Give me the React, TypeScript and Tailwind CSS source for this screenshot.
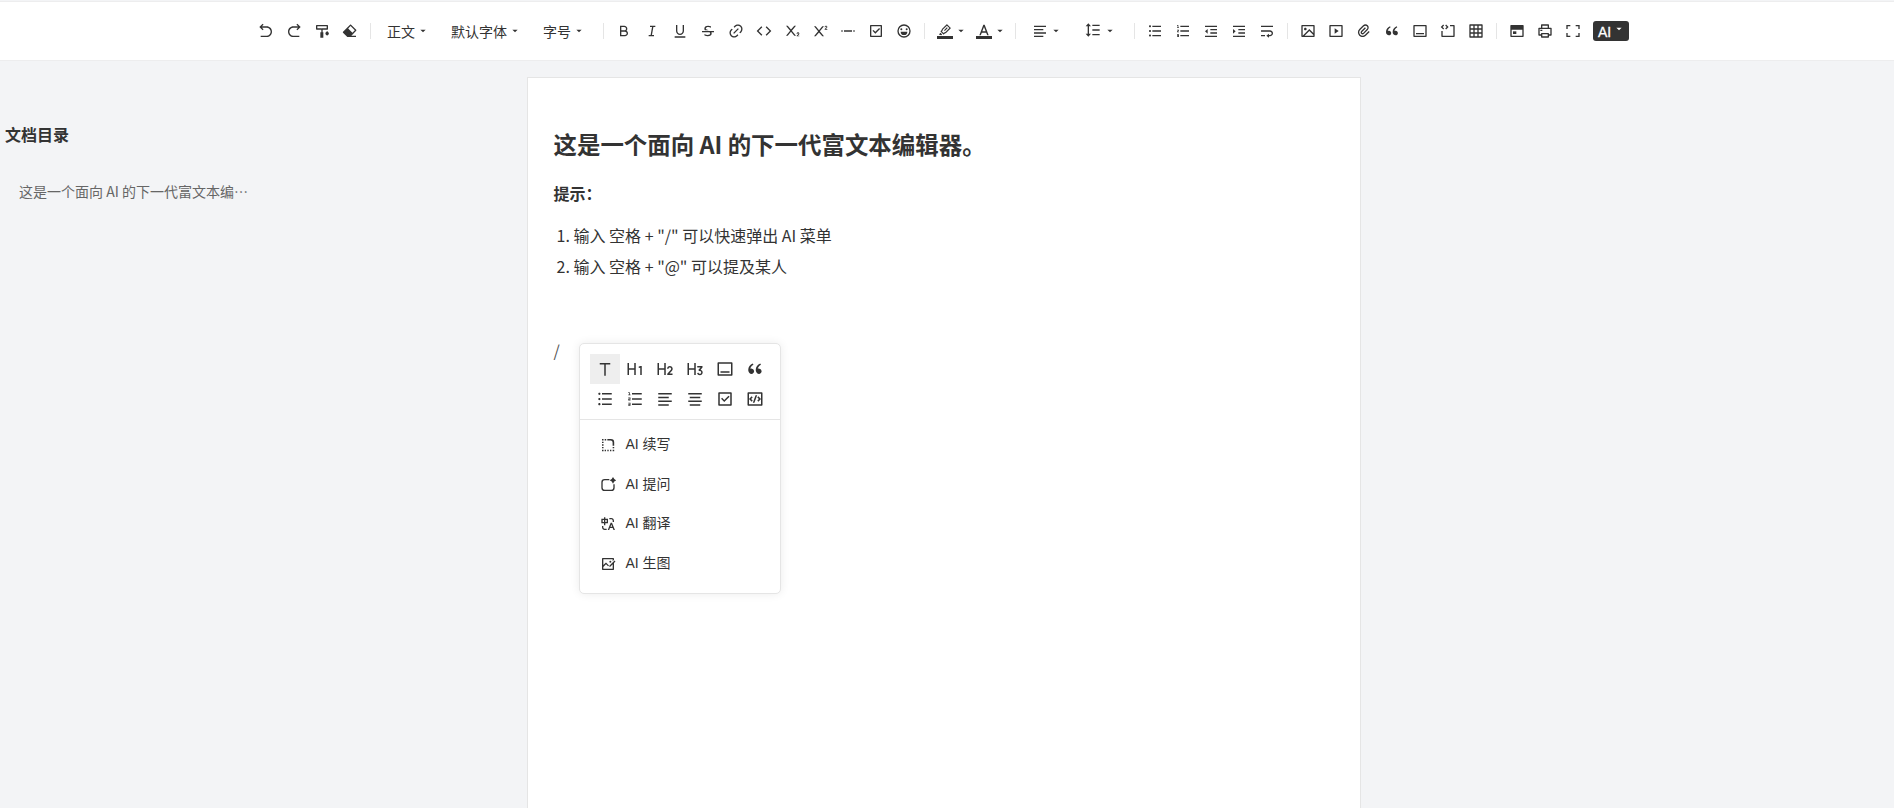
import type { ReactNode } from "react";
import type { IconType } from "react-icons";
import {
  RiArrowGoBackLine, RiArrowGoForwardLine, RiEraserFill, RiBold, RiItalic, RiUnderline,
  RiStrikethrough, RiLink, RiCodeLine, RiSubscript, RiSuperscript, RiSeparator,
  RiCheckboxLine, RiMarkPenLine, RiAlignLeft, RiAlignCenter,
  RiListUnordered, RiListOrdered, RiIndentDecrease, RiIndentIncrease, RiTextWrap, RiImageLine,
  RiAttachment2, RiDoubleQuotesL, RiLayoutBottom2Line, RiPrinterLine,
  RiFullscreenLine, RiText, RiH1, RiH2, RiH3, RiTranslate, RiCodeBoxLine,
} from "react-icons/ri";

function Drawing({ children, size = 16 }: { children: ReactNode; size?: number }) {
  return (
    <svg width={size} height={size} viewBox="0 0 24 24" fill="currentColor">
      {children}
    </svg>
  );
}

function PainterIcon() {
  return (
    <Drawing>
      <path d="M4 3h16a1 1 0 0 1 1 1v5a1 1 0 0 1-1 1h-7v4h1v8h-4.500v-8H11V9a1 1 0 0 1 .5-1H19V5H5v3h6v2H4a1 1 0 0 1-1-1V4a1 1 0 0 1 1-1z" />
      <path d="M19.700 12l2 2.200a2.600 2.600 0 1 1-4 0z" />
    </Drawing>
  );
}
function LineHeightIcon() {
  return (
    <Drawing>
      <path d="M11 4h11v2H11zM11 11h11v2H11zM11 18h11v2H11zM5 2l4 4.500H6v11h3L5 22l-4-4.500h3v-11H1z" />
    </Drawing>
  );
}
function EmojiIcon() {
  return (
    <Drawing>
      <path d="M12 2a10 10 0 1 1 0 20 10 10 0 0 1 0-20zm0 2a8 8 0 1 0 0 16 8 8 0 0 0 0-16z" fillRule="evenodd" />
      <path d="M7 13h10a5 5 0 0 1-10 0zM8 11a1.500 1.500 0 1 1 0-3 1.500 1.500 0 0 1 0 3zm8 0a1.500 1.500 0 1 1 0-3 1.500 1.500 0 0 1 0 3z" />
    </Drawing>
  );
}
function GridIcon() {
  return (
    <Drawing>
      <path d="M3 2h18a1 1 0 0 1 1 1v18a1 1 0 0 1-1 1H3a1 1 0 0 1-1-1V3a1 1 0 0 1 1-1zm1 2v4h4V4zm6 0v4h4V4zm6 0v4h4V4zM4 10v4h4v-4zm6 0v4h4v-4zm6 0v4h4v-4zM4 16v4h4v-4zm6 0v4h4v-4zm6 0v4h4v-4z" fillRule="evenodd" />
    </Drawing>
  );
}
function VideoIcon() {
  return (
    <Drawing>
      <path d="M3 3h18a1 1 0 0 1 1 1v16a1 1 0 0 1-1 1H3a1 1 0 0 1-1-1V4a1 1 0 0 1 1-1zm1 2v14h16V5H4zm6 3l6 4-6 4V8z" />
    </Drawing>
  );
}
function CodeBlockIcon() {
  return (
    <Drawing>
      <path d="M4.8 2.2L6.2 3.6 3.9 6l2.3 2.4-1.4 1.4L1.1 6zM9.2 2.2L7.8 3.6 10.1 6 7.8 8.4l1.4 1.4L12.9 6zM15 3h6a1 1 0 0 1 1 1v16a1 1 0 0 1-1 1H3a1 1 0 0 1-1-1v-8h2v7h16V5h-5z" />
    </Drawing>
  );
}
function SourceIcon() {
  return (
    <Drawing>
      <path d="M3 3h18a1 1 0 0 1 1 1v16a1 1 0 0 1-1 1H3a1 1 0 0 1-1-1V4a1 1 0 0 1 1-1zm1 7v9h16v-9H4z" fillRule="evenodd" />
      <path d="M6 12.500h5v4H6z" />
    </Drawing>
  );
}
function ContinueIcon() {
  return (
    <Drawing>
      <path d="M3 3h2.300v2.300H3zM7 3h2.300v2.300H7zM3 7h2.300v2H3zM3 11h2.300v2H3zM3 15h2.300v2H3zM3 19h2.300v2.300H3zM7 19h2v2.300H7zM11 19h2v2.300h-2zM15 19h2v2.300h-2zM19 19h2.300v2.300h-2.300zM19 15h2.300v2h-2.300zM11 3h5.300a5 5 0 0 1 5 5v5h-2.400V8.400a3 3 0 0 0-3-3H11z" />
    </Drawing>
  );
}
function AskIcon() {
  return (
    <Drawing>
      <path d="M14 3v2H7a3 3 0 0 0-3 3v8a3 3 0 0 0 3 3h10a3 3 0 0 0 3-3v-5h2v5a5 5 0 0 1-5 5H7a5 5 0 0 1-5-5V8a5 5 0 0 1 5-5z" />
      <path d="M19.500 0l1.900 3.100L24.500 5l-3.100 1.900L19.500 10l-1.900-3.100L14.500 5l3.100-1.900z" />
    </Drawing>
  );
}
function DrawIcon() {
  return (
    <Drawing>
      <path d="M20 3a1 1 0 0 1 1 1v1.800l-2 2V5H5v8.600L9 9.600l4.500 4.500-1.400 1.400L9 12.400l-4 4V19h14v-7l2-2v10a1 1 0 0 1-1 1H4a1 1 0 0 1-1-1V4a1 1 0 0 1 1-1zM21.800 6.800l1.400 1.400-7.800 7.800H14v-1.400zM15.500 7a1.500 1.500 0 1 1 0 3 1.500 1.500 0 0 1 0-3z" />
    </Drawing>
  );
}
function LetterIcon() {
  return (
    <Drawing>
      <path d="M15.246 16H8.754l-1.600 4H5l6-16h2l6 16h-2.154l-1.600-4zm-.8-2L12 7.500 9.554 14h4.892z" />
    </Drawing>
  );
}

function Caret({ className = "" }: { className?: string }) {
  return (
    <svg className={className} width="16" height="16" viewBox="0 0 24 24" fill="currentColor">
      <path d="M12 14L8 10H16L12 14Z" />
    </svg>
  );
}

type AnyIcon = IconType | (() => ReactNode);

function Icons({ list }: { list: AnyIcon[] }) {
  return (
    <>
      {list.map((Icon, i) => (
        <button key={i} className="flex h-7 w-7 items-center justify-center">
          <Icon size={16} />
        </button>
      ))}
    </>
  );
}

function Divider() {
  return <span className="mx-1.5 h-4 w-px shrink-0 bg-[#e5e5e5]" />;
}

function Picker({ label, width }: { label: string; width: string }) {
  return (
    <button className={`flex h-7 items-center pl-2.5 text-sm ${width}`}>
      <span>{label}</span>
      <Caret />
    </button>
  );
}

function ColorPicker({ icon: Icon }: { icon: AnyIcon }) {
  return (
    <button className="flex h-7 w-[39px] items-center pl-1.5">
      <span className="flex h-4 w-4 flex-col items-center justify-between">
        <span className="flex h-[13px] items-center">
          <Icon size={14} />
        </span>
        <span className="h-[3px] w-4 shrink-0 bg-[#333]" />
      </span>
      <Caret />
    </button>
  );
}

const blockIcons: AnyIcon[] = [
  RiText, RiH1, RiH2, RiH3, RiLayoutBottom2Line, RiDoubleQuotesL,
  RiListUnordered, RiListOrdered, RiAlignLeft, RiAlignCenter, RiCheckboxLine, RiCodeBoxLine,
];

const aiActions: { icon: AnyIcon; label: string }[] = [
  { icon: ContinueIcon, label: "AI 续写" },
  { icon: AskIcon, label: "AI 提问" },
  { icon: RiTranslate, label: "AI 翻译" },
  { icon: DrawIcon, label: "AI 生图" },
];

function Toolbar() {
  return (
    <header className="mt-px flex h-[60px] items-center border-y border-[#ededee] bg-white pl-[252px]">
      <Icons list={[RiArrowGoBackLine, RiArrowGoForwardLine, PainterIcon, RiEraserFill]} />
      <Divider />
      <Picker label="正文" width="w-16" />
      <Picker label="默认字体" width="w-[92px]" />
      <Picker label="字号" width="w-16" />
      <Divider />
      <Icons
        list={[
          RiBold, RiItalic, RiUnderline, RiStrikethrough, RiLink, RiCodeLine,
          RiSubscript, RiSuperscript, RiSeparator, RiCheckboxLine, EmojiIcon,
        ]}
      />
      <Divider />
      <ColorPicker icon={RiMarkPenLine} />
      <ColorPicker icon={LetterIcon} />
      <Divider />
      <button className="flex h-7 w-[53px] items-center pl-2.5">
        <RiAlignLeft size={16} />
        <Caret />
      </button>
      <button className="flex h-7 w-[53px] items-center pl-2.5">
        <span className="-mt-0.5">
          <LineHeightIcon />
        </span>
        <Caret className="ml-px" />
      </button>
      <Divider />
      <Icons list={[RiListUnordered, RiListOrdered, RiIndentDecrease, RiIndentIncrease, RiTextWrap]} />
      <Divider />
      <Icons
        list={[
          RiImageLine, VideoIcon, RiAttachment2, RiDoubleQuotesL,
          RiLayoutBottom2Line, CodeBlockIcon, GridIcon,
        ]}
      />
      <Divider />
      <Icons list={[SourceIcon, RiPrinterLine, RiFullscreenLine]} />
      <button className="ml-1.5 flex h-5 w-9 items-center rounded-[3px] bg-[#333] pl-[5px] font-['Liberation_Sans',sans-serif] text-sm text-white [-webkit-text-stroke:0.3px_white]">
        <span className="mt-px">AI</span>
        <Caret className="-mt-1" />
      </button>
    </header>
  );
}

function SlashMenu() {
  return (
    <div className="absolute top-0 left-[25px] h-[251px] w-[202px] rounded-[5px] border border-[#e5e5e5] bg-white text-[#333] shadow-[0_0_10px_rgba(0,0,0,0.08)]">
      <div className="grid grid-cols-6 border-b border-[#e5e5e5] px-2.5 pt-2.5 pb-[5px]">
        {blockIcons.map((Icon, i) => (
          <button
            key={i}
            className={`flex h-[30px] w-[30px] items-center justify-center ${i === 0 ? "bg-[#eee]" : ""}`}
          >
            <Icon size={18} />
          </button>
        ))}
      </div>
      <ul className="pt-[5px] pl-5 font-['Liberation_Sans','Noto_Sans_CJK_SC',sans-serif] text-sm">
        {aiActions.map(({ icon: Icon, label }) => (
          <li key={label} className="flex h-[39.700px] items-center gap-[10px]">
            <Icon size={16} />
            <span className="-mt-0.5">{label}</span>
          </li>
        ))}
      </ul>
    </div>
  );
}

export default function App() {
  return (
    <div className="flex h-[808px] flex-col overflow-hidden bg-[#f3f4f6] font-['Noto_Sans_CJK_SC',sans-serif] text-[#333]">
      <Toolbar />
      <div className="flex min-h-0 flex-1">
        <aside className="w-[527px] shrink-0 pt-[61px] pl-[5px]">
          <h2 className="text-base leading-6 font-bold">文档目录</h2>
          <p className="mt-[33px] w-[243px] truncate pl-3.5 text-sm leading-6 text-[#666]">这是一个面向 AI 的下一代富文本编⋯</p>
        </aside>
        <main className="mt-4 w-[834px] border border-b-0 border-[#e5e5e5] bg-white pt-12 pl-[25.500px]">
          <h1 className="text-[23.460px] leading-9 font-bold">这是一个面向 AI 的下一代富文本编辑器。</h1>
          <p className="mt-[19px] text-base leading-6 font-bold">提示：</p>
          <ol className="mt-[15px] list-decimal pl-5 text-base leading-[31px]">
            <li>输入 空格 + "/" 可以快速弹出 AI 菜单</li>
            <li>输入 空格 + "@" 可以提及某人</li>
          </ol>
          <div className="relative mt-[61px] text-base leading-[14px] text-[#555]">
            /
            <SlashMenu />
          </div>
        </main>
      </div>
    </div>
  );
}
